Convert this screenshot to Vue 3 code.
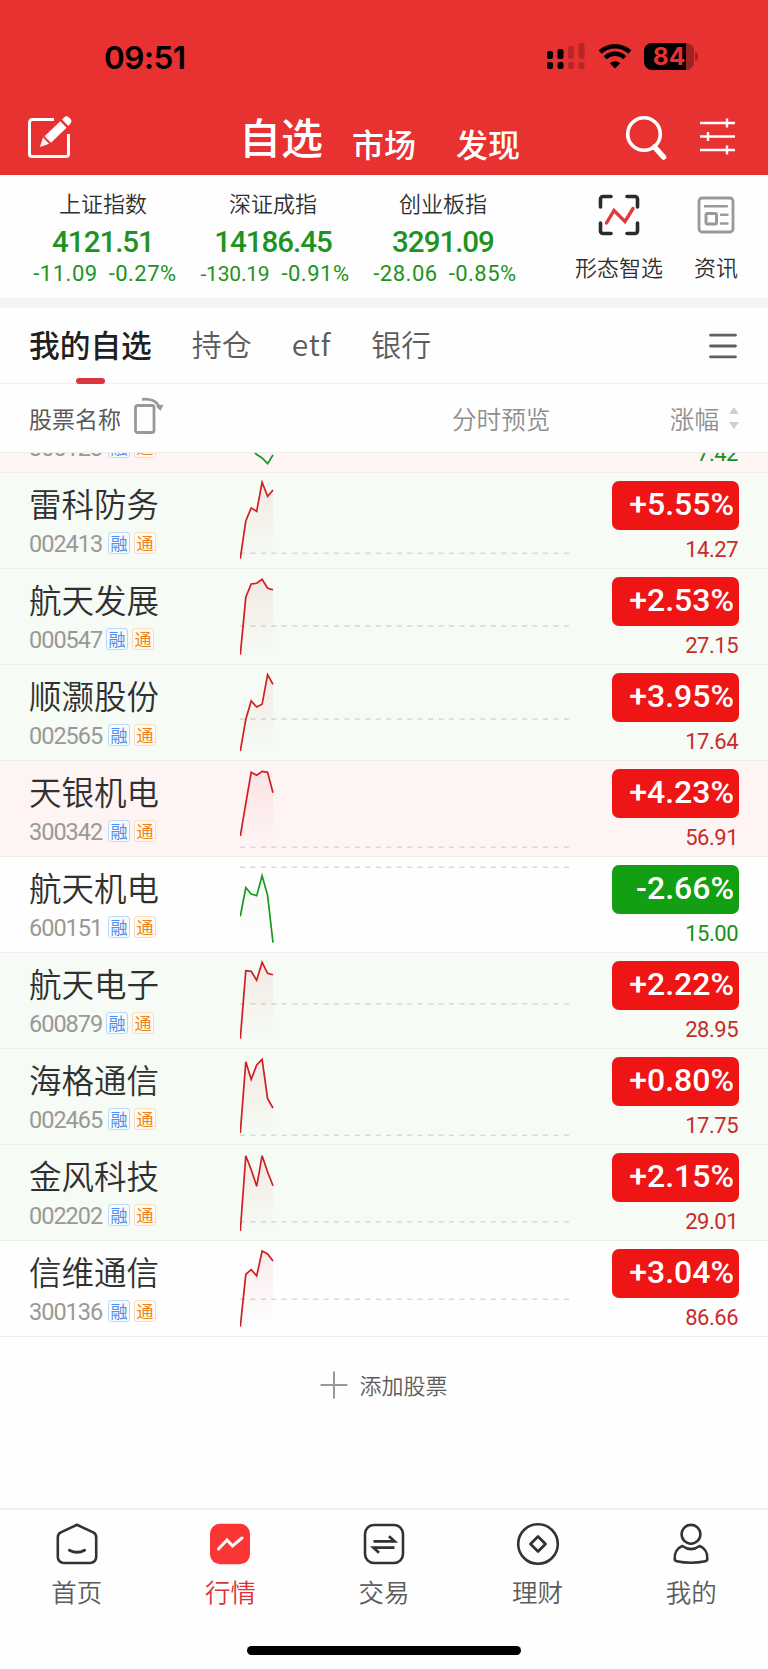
<template>
  <div class="page">
    <!-- 顶部 -->
    <header class="top">
      <div class="status-bar">
        <span class="clock">09:51</span>
        <div class="status-icons">
          <svg class="signal" width="40" height="28" viewBox="0 0 40 28">
            <rect x="1" y="9" width="6" height="8" rx="2" />
            <rect x="11.5" y="7" width="6" height="10" rx="2" />
            <rect x="1" y="20" width="6" height="7" rx="2" />
            <rect x="11.5" y="20" width="6" height="7" rx="2" />
            <g opacity="0.2">
              <rect x="22" y="4" width="6" height="13" rx="2" />
              <rect x="32.5" y="1" width="6" height="16" rx="2" />
              <rect x="22" y="20" width="6" height="7" rx="2" />
              <rect x="32.5" y="20" width="6" height="7" rx="2" />
            </g>
          </svg>
          <svg class="wifi" width="34" height="26" viewBox="0 0 34 26">
            <path d="M2.2 9.2a21.5 21.5 0 0 1 29.6 0" fill="none" stroke="#000" stroke-width="4.4" />
            <path d="M7.2 14.8a14 14 0 0 1 19.6 0" fill="none" stroke="#000" stroke-width="4.4" />
            <path d="M17 25.5l-5.2-5.2a7.4 7.4 0 0 1 10.4 0z" />
          </svg>
          <div class="battery">
            <span class="battery-body">84</span>
            <span class="battery-cap"></span>
          </div>
        </div>
      </div>
      <div class="title-bar">
        <svg class="edit" width="48" height="46" viewBox="0 0 48 46" fill="none">
          <path d="M28 5.500H6.500a3 3 0 0 0-3 3V40a2.500 2.500 0 0 0 2.500 2.500h34a2.500 2.500 0 0 0 2.500-2.500V20" stroke="#fff" stroke-width="3" />
          <path d="M14 33l3-9.600 6 6.400z" fill="#fff" />
          <path d="M18.500 22.300L34.300 7.300l6.300 6.500-15.700 15z" fill="#fff" />
          <path d="M36 5.600l1.800-1.900a3.800 3.800 0 0 1 5.400 0l.9.9a3.800 3.800 0 0 1 0 5.400L42.200 12z" fill="#fff" />
        </svg>
        <nav class="main-tabs">
          <span class="main-tab active">自选</span>
          <span class="main-tab">市场</span>
          <span class="main-tab">发现</span>
        </nav>
        <svg class="search" width="44" height="46" viewBox="0 0 44 46" fill="none" stroke="#fff">
          <circle cx="19" cy="19" r="16.300" stroke-width="3.600" />
          <path d="M29.500 32L38.500 42" stroke-width="5.500" stroke-linecap="round" />
        </svg>
        <svg class="filter" width="38" height="38" viewBox="0 0 38 38" fill="none" stroke="#fff" stroke-width="2.400">
          <path d="M1 6h35M1 19.500h35M1 33h35" />
          <path d="M28 1.500v9M9 15v9M28 28.500v9" />
        </svg>
      </div>
    </header>

    <!-- 指数 -->
    <section class="indices">
      <div v-for="item in indices" :key="item.name" class="index" :class="{ tight: item.tight }">
        <span class="index-name">{{ item.name }}</span>
        <span class="index-value">{{ item.value }}</span>
        <span class="index-change"><span class="index-diff">{{ item.diff }}</span><span>{{ item.rate }}</span></span>
      </div>
      <div class="shortcut pattern">
        <svg width="42" height="42" viewBox="0 0 42 42" fill="none" stroke-linecap="round">
          <path d="M2.500 13V5a2.500 2.500 0 0 1 2.500-2.500h8M29 2.500h8A2.500 2.500 0 0 1 39.500 5v8M39.500 29v8a2.500 2.500 0 0 1-2.500 2.500h-8M13 39.500H5A2.500 2.500 0 0 1 2.500 37v-8" stroke="#2b2b2b" stroke-width="3.600" />
          <path d="M8.500 29L16 16.500l11 11 8-13" stroke="#e03a3a" stroke-width="3.400" />
        </svg>
        <span>形态智选</span>
      </div>
      <div class="shortcut news">
        <svg width="42" height="42" viewBox="0 0 42 42" fill="none" stroke="#999" stroke-width="2.800">
          <rect x="4" y="4" width="34" height="34" rx="3" />
          <path d="M10 12.200h22M26 20.800h6.500M26 29.500h6.500" stroke-width="2.400" stroke-linecap="round" />
          <rect x="11" y="19.500" width="10.500" height="10.500" rx="1.500" stroke-width="3" />
        </svg>
        <span>资讯</span>
      </div>
    </section>

    <!-- 分组 -->
    <section class="groups">
      <span class="group active">我的自选</span>
      <span class="group">持仓</span>
      <span class="group latin">etf</span>
      <span class="group">银行</span>
      <svg class="menu" width="28" height="26" viewBox="0 0 28 26">
        <path d="M1.500 2.200h25M1.500 13h25M1.500 23.800h25" stroke="#606060" stroke-width="2.800" stroke-linecap="round" />
      </svg>
    </section>

    <!-- 表头 -->
    <section class="table-head">
      <span class="col-name">股票名称</span>
      <svg class="rotate" width="32" height="38" viewBox="0 0 32 38" fill="none" stroke="#999">
        <rect x="2.500" y="8.500" width="18.500" height="27" rx="2" stroke-width="2.800" />
        <path d="M9 2.300c9-1 15.500 2.200 17.300 8.500" stroke-width="2.800" />
        <path d="M22.800 9l7.700-1.500-3 6.500z" fill="#999" stroke="none" />
      </svg>
      <span class="col-preview">分时预览</span>
      <span class="col-rate">涨幅</span>
      <svg class="sort" width="10" height="22" viewBox="0 0 10 22" fill="#d0d0d0">
        <path d="M5 0l5 7H0zM5 22l5-7H0z" />
      </svg>
    </section>

    <!-- 股票列表 -->
    <section class="stocks">
      <div v-for="stock in stocks" :key="stock.code" class="stock" :class="[stock.tone, { clipped: !stock.name }]">
        <div class="stock-info">
          <span class="stock-name">{{ stock.name }}</span>
          <div class="stock-meta">
            <span class="stock-code" :class="{ narrow: stock.narrow }">{{ stock.code }}</span>
            <span class="tag rong">融</span>
            <span class="tag tong">通</span>
          </div>
        </div>
        <svg class="chart" width="332" height="95" viewBox="0 0 332 95">
          <defs>
            <linearGradient :id="'fill' + stock.code" x1="0" y1="0" x2="0" y2="1">
              <stop offset="0" :stop-color="lineColor(stock)" :stop-opacity="stock.down ? 0.04 : 0.08" />
              <stop offset="1" :stop-color="lineColor(stock)" stop-opacity="0" />
            </linearGradient>
          </defs>
          <line v-if="stock.base" x1="0" x2="331" :y1="stock.base" :y2="stock.base" class="base-line" />
          <polygon v-if="stock.name" :points="areaPoints(stock.trend)" :fill="`url(#fill${stock.code})`" />
          <polyline :points="linePoints(stock.trend)" fill="none" :stroke="lineColor(stock)" stroke-width="1.700" />
        </svg>
        <div class="quote" :class="{ down: stock.down }">
          <span class="rate">{{ stock.rate }}</span>
          <span class="price">{{ stock.price }}</span>
        </div>
      </div>
    </section>

    <div class="add">
      <svg width="28" height="28" viewBox="0 0 28 28">
        <path d="M14 0.500v27M0.500 14h27" stroke="#999" stroke-width="2" />
      </svg>
      <span>添加股票</span>
    </div>

    <!-- 底部导航 -->
    <footer class="bottom">
      <div class="nav">
        <div class="nav-item">
          <svg width="44" height="44" viewBox="0 0 44 44" fill="none" stroke="#333" stroke-width="2.600" stroke-linejoin="round">
            <path d="M22 2.800l16.200 7.600q3 1.600 3 5V35a6 6 0 0 1-6 6H8.800a6 6 0 0 1-6-6V15.400q0-3.400 3-5z" />
            <path d="M14.500 28.200q7.500 4.300 15 0" stroke-width="3" stroke-linecap="round" />
          </svg>
          <span>首页</span>
        </div>
        <div class="nav-item active">
          <svg width="44" height="44" viewBox="0 0 44 44" fill="none">
            <rect x="2" y="1.800" width="40" height="40.400" rx="10" fill="#fb3434" />
            <path d="M10.500 27L19 18l5.500 6L34 16" stroke="#fff" stroke-width="3" stroke-linecap="round" />
          </svg>
          <span>行情</span>
        </div>
        <div class="nav-item">
          <svg width="44" height="44" viewBox="0 0 44 44" fill="none" stroke="#333" stroke-width="2.600">
            <rect x="3" y="3" width="38" height="38" rx="9" />
            <path d="M11.500 19.300h21l-5.500-5M32.500 25.700h-21l5.500 5" stroke-width="2.800" />
          </svg>
          <span>交易</span>
        </div>
        <div class="nav-item">
          <svg width="44" height="44" viewBox="0 0 44 44" fill="none" stroke="#333" stroke-width="2.600" stroke-linejoin="round">
            <circle cx="22" cy="22" r="19.800" />
            <path d="M22 14.500l7.500 7.500-7.500 7.500-7.500-7.500z" stroke-width="2.800" />
          </svg>
          <span>理财</span>
        </div>
        <div class="nav-item">
          <svg width="44" height="44" viewBox="0 0 44 44" fill="none" stroke="#333" stroke-width="2.600" stroke-linejoin="round">
            <circle cx="22" cy="12.300" r="9.400" />
            <path d="M13.300 24q8.700 6.200 17.400 0c5 2 8 7 7.600 13q0 1.800-2 2.200-14.300 3-28.600 0-2-.4-2-2.200C5.300 31 8.300 26 13.300 24z" />
          </svg>
          <span>我的</span>
        </div>
      </div>
      <div class="home-indicator"></div>
    </footer>
  </div>
</template>

<script setup>
// 指数
const indices = [
  { name: '上证指数', value: '4121.51', diff: '-11.09', rate: '-0.27%' },
  { name: '深证成指', value: '14186.45', diff: '-130.19', rate: '-0.91%', tight: true },
  { name: '创业板指', value: '3291.09', diff: '-28.06', rate: '-0.85%' }
]

// 自选股，第一行已滚动到表头下方
const stocks = [
  { name: '', code: '300123', rate: '', price: '7.42', down: true, tone: 'pink', trend: [60, 62, 72, 77.5, 81, 86.7, 78] },
  { name: '雷科防务', code: '002413', rate: '+5.55%', price: '14.27', tone: 'green', base: 80.3, trend: [85.7, 48, 35, 38.3, 9.3, 23.3, 17] },
  { name: '航天发展', code: '000547', narrow: true, rate: '+2.53%', price: '27.15', tone: 'green', base: 57, trend: [85.7, 28.3, 15, 14.3, 10.3, 19.3, 20.7] },
  { name: '顺灏股份', code: '002565', rate: '+3.95%', price: '17.64', tone: 'green', base: 54, trend: [86, 54.3, 36, 42, 39.3, 9.7, 19.3] },
  { name: '天银机电', code: '300342', rate: '+4.23%', price: '56.91', tone: 'pink', base: 86.3, trend: [75, 42.3, 11.3, 14.3, 10.3, 11.3, 31.7] },
  { name: '航天机电', code: '600151', rate: '-2.66%', price: '15.00', down: true, tone: 'plain', base: 10.3, trend: [59.3, 30.7, 37, 38.7, 18.7, 38.3, 85.7] },
  { name: '航天电子', code: '600879', narrow: true, rate: '+2.22%', price: '28.95', tone: 'green', base: 50.7, trend: [85.7, 17.7, 18.3, 27.3, 9.3, 20.3, 21.7] },
  { name: '海格通信', code: '002465', rate: '+0.80%', price: '17.75', tone: 'green', base: 86.3, trend: [84, 12.7, 30.3, 16, 10.3, 49.7, 59] },
  { name: '金风科技', code: '002202', rate: '+2.15%', price: '29.01', tone: 'green', base: 76.7, trend: [86, 10.7, 24.7, 41.3, 10.7, 27, 40.7] },
  { name: '信维通信', code: '300136', rate: '+3.04%', price: '86.66', tone: 'plain', base: 58.3, trend: [85.7, 33.3, 28.7, 35, 10, 13, 20] }
]

const STEP = 5.45

const lineColor = (stock) => (stock.down ? '#169a1c' : '#cf1f22')

const linePoints = (trend) => trend.map((y, i) => `${(i * STEP + 0.3).toFixed(1)},${y}`).join(' ')

const areaPoints = (trend) => `0.3,87 ${linePoints(trend)} ${(6 * STEP + 0.3).toFixed(1)},87`
</script>

<style>
body {
  margin: 0;
  background: #ffffff;
}
</style>

<style scoped>
.page {
  width: 768px;
  height: 1669px;
  display: flex;
  flex-direction: column;
  overflow: hidden;
  background: #fefefe;
  font-family: "Noto Sans CJK SC", sans-serif;
  font-weight: 350;
  color: #303030;
  white-space: nowrap;
}

.page svg {
  display: block;
  flex-shrink: 0;
}

.top {
  height: 175px;
  flex-shrink: 0;
  background: #e83131;
}

.status-bar {
  height: 115px;
  box-sizing: border-box;
  padding: 38px 70px 0 104px;
  display: flex;
  justify-content: space-between;
  align-items: flex-start;
}

.clock {
  font: 600 31.500px/40px Inter, sans-serif;
  letter-spacing: -0.500px;
  color: #000000;
}

.status-icons {
  display: flex;
  align-items: flex-start;
  padding-top: 4px;
}

.wifi {
  margin: 1px 12px 0 12px;
}

.battery {
  display: flex;
  align-items: center;
  margin-top: 1px;
}

.battery-body {
  width: 50px;
  height: 27px;
  border-radius: 8px;
  background: linear-gradient(90deg, #000000 42px, #9d2222 42px);
  color: #e83131;
  font: 700 24.500px/27px Inter, sans-serif;
  text-align: center;
}

.battery-cap {
  width: 3px;
  height: 9px;
  margin-left: 1px;
  border-radius: 0 3px 3px 0;
  background: #a82424;
}

.title-bar {
  height: 60px;
  display: flex;
  align-items: flex-start;
}

.edit {
  margin: -1px 0 0 26px;
}

.main-tabs {
  display: flex;
  margin-left: 165px;
  width: 386px;
}

.main-tab {
  font-size: 32px;
  line-height: 56px;
  font-weight: 500;
  color: #ffffff;
  margin-right: 40px;
}

.main-tab.active {
  font-size: 42px;
  line-height: 42px;
  margin-right: 29px;
}

.search {
  margin-left: 0;
}

.filter {
  margin: 2px 0 0 30px;
}

.indices {
  height: 123px;
  display: flex;
  align-items: flex-start;
  flex-shrink: 0;
  padding-left: 19px;
  border-bottom: 10px solid #f4f4f4;
}

.index {
  width: 168px;
  padding-top: 11px;
  display: flex;
  flex-direction: column;
  align-items: center;
}

.index.tight {
  width: 172px;
}

.index-name {
  font-size: 22px;
  line-height: 32px;
}

.index-value {
  margin-top: 6px;
  font: 500 29.500px/36px Roboto, sans-serif;
  letter-spacing: -1px;
  color: #20931f;
}

.index-change {
  display: flex;
  align-items: baseline;
  gap: 11px;
  margin-left: 4px;
  font: 400 22px/28px Roboto, sans-serif;
  letter-spacing: 0.500px;
  color: #20931f;
}

.tight .index-change {
  gap: 12px;
}

.tight .index-diff {
  font-size: 21px;
  letter-spacing: -0.200px;
}

.shortcut {
  display: flex;
  flex-direction: column;
  align-items: center;
  padding-top: 19px;
  font-size: 22px;
  line-height: 32px;
}

.shortcut span {
  margin-top: 14px;
}

.pattern {
  margin-left: 48px;
}

.news {
  margin-left: 31px;
}

.groups {
  height: 76px;
  box-sizing: border-box;
  flex-shrink: 0;
  display: flex;
  align-items: flex-start;
  padding: 13px 31px 0 29px;
  border-bottom: 1px solid #f0f0f0;
}

.group {
  font-size: 30px;
  line-height: 45px;
  color: #5c5c5c;
  margin-right: 40px;
}

.group.latin {
  letter-spacing: 0.900px;
}

.group.active {
  position: relative;
  font-size: 30.700px;
  font-weight: 500;
  color: #202020;
}

.group.active::after {
  content: "";
  position: absolute;
  left: 47px;
  top: 57px;
  width: 29px;
  height: 6px;
  border-radius: 3px;
  background: #d93640;
}

.menu {
  margin: 12px 0 0 auto;
}

.table-head {
  height: 69px;
  box-sizing: border-box;
  flex-shrink: 0;
  display: flex;
  align-items: center;
  padding: 0 29px 0 29px;
  font-size: 24.600px;
  color: #8f8f8f;
  border-bottom: 1px solid #ececec;
}

.col-name {
  width: 92px;
  font-size: 23px;
  font-weight: 400;
  color: #5a5a5a;
}

.rotate {
  margin: -5px 0 0 12px;
}

.col-preview {
  margin-left: 287px;
}

.col-rate {
  margin-left: auto;
}

.sort {
  margin-left: 10px;
}

.stocks {
  height: 885px;
  flex-shrink: 0;
  overflow: hidden;
}

.stock {
  height: 96px;
  box-sizing: border-box;
  display: flex;
  padding-right: 29px;
  border-bottom: 1px solid #eceeec;
}

.stock.clipped {
  margin-top: -76px;
}

.stock.green {
  background: #f6fbf5;
}

.stock.pink {
  background: #fff4f4;
}

.stock-info {
  width: 211px;
  padding-left: 29px;
}

.stock-name {
  display: block;
  height: 48px;
  padding-top: 6px;
  font-size: 32.500px;
  line-height: 48px;
}

.stock-meta {
  display: flex;
  align-items: center;
  height: 24px;
  margin-top: 4px;
}

.stock-code {
  width: 79px;
  padding-top: 1px;
  font: 400 23.500px/24px Roboto, sans-serif;
  letter-spacing: -1px;
  color: #999999;
}

.stock-code.narrow {
  width: 77px;
}

.tag {
  width: 22px;
  height: 22px;
  box-sizing: border-box;
  margin-right: 4px;
  border: 1px solid;
  border-radius: 3px;
  font-size: 17px;
  font-weight: 400;
  line-height: 19px;
  text-align: center;
}

.rong {
  color: #4c8df0;
  border-color: #bcd8f8;
  background: #f8fcff;
}

.tong {
  color: #ee8420;
  border-color: #fbdcb8;
  background: #fffbf4;
}

.base-line {
  stroke: #d8d8d6;
  stroke-width: 1.400;
  stroke-dasharray: 5 5.450;
}

.quote {
  margin-left: auto;
  width: 127px;
  padding-top: 8px;
  color: #c92a2a;
}

.rate {
  display: block;
  height: 49px;
  box-sizing: border-box;
  padding-right: 5px;
  border-radius: 7px;
  background: #ef1515;
  color: #ffffff;
  font: 500 32px/47px Roboto, sans-serif;
  text-align: right;
}

.price {
  display: block;
  margin-top: 5px;
  padding-right: 1px;
  font: 400 22px/30px Roboto, sans-serif;
  letter-spacing: -0.500px;
  text-align: right;
}

.quote.down {
  color: #15901a;
}

.down .rate {
  background: #12a012;
}

.add {
  display: flex;
  align-items: center;
  justify-content: center;
  gap: 11px;
  height: 94px;
  font-size: 22px;
  color: #5c5c5c;
}

.add span {
  margin-top: -3px;
}

.bottom {
  margin-top: auto;
  height: 161px;
  box-sizing: border-box;
  flex-shrink: 0;
  border-top: 2px solid #f1f1f1;
}

.nav {
  display: flex;
  height: 136px;
}

.nav-item {
  flex: 1;
  display: flex;
  flex-direction: column;
  align-items: center;
  padding-top: 12px;
  font-size: 25.500px;
  line-height: 36px;
  color: #5c5c5c;
}

.nav-item span {
  margin-top: 7px;
}

.nav-item.active {
  color: #e03236;
}

.home-indicator {
  width: 274px;
  height: 9px;
  margin: 0 auto;
  border-radius: 5px;
  background: #000000;
}
</style>
